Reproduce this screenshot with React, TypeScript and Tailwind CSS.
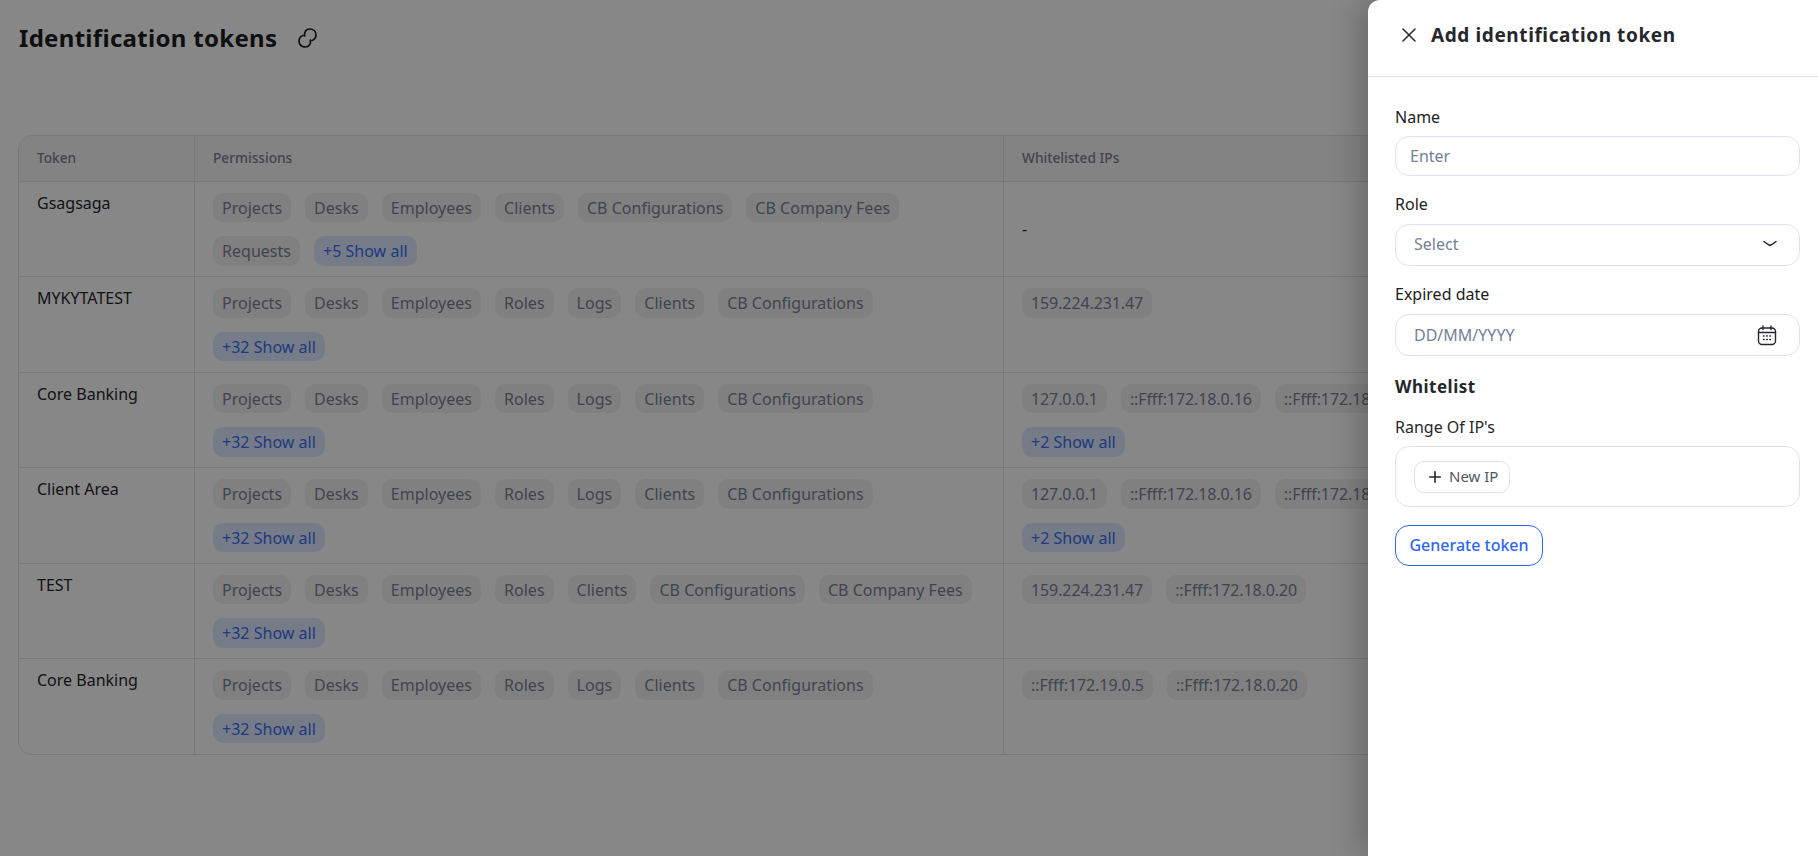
import { Plus } from "lucide-react";

type Row = {
    name: string,
    permissions: string[],
    more: string,
    ips: string[],
    ipsMore?: string
}

const rows: Row[] = [
    {
        name: "Gsagsaga",
        permissions: ["Projects", "Desks", "Employees", "Clients", "CB Configurations", "CB Company Fees", "Requests"],
        more: "+5 Show all",
        ips: []
    },
    {
        name: "MYKYTATEST",
        permissions: ["Projects", "Desks", "Employees", "Roles", "Logs", "Clients", "CB Configurations"],
        more: "+32 Show all",
        ips: ["159.224.231.47"]
    },
    {
        name: "Core Banking",
        permissions: ["Projects", "Desks", "Employees", "Roles", "Logs", "Clients", "CB Configurations"],
        more: "+32 Show all",
        ips: ["127.0.0.1", "::Ffff:172.18.0.16", "::Ffff:172.18.0.17"],
        ipsMore: "+2 Show all"
    },
    {
        name: "Client Area",
        permissions: ["Projects", "Desks", "Employees", "Roles", "Logs", "Clients", "CB Configurations"],
        more: "+32 Show all",
        ips: ["127.0.0.1", "::Ffff:172.18.0.16", "::Ffff:172.18.0.17"],
        ipsMore: "+2 Show all"
    },
    {
        name: "TEST",
        permissions: ["Projects", "Desks", "Employees", "Roles", "Clients", "CB Configurations", "CB Company Fees"],
        more: "+32 Show all",
        ips: ["159.224.231.47", "::Ffff:172.18.0.20"]
    },
    {
        name: "Core Banking",
        permissions: ["Projects", "Desks", "Employees", "Roles", "Logs", "Clients", "CB Configurations"],
        more: "+32 Show all",
        ips: ["::Ffff:172.19.0.5", "::Ffff:172.18.0.20"]
    }
]

const Chip = ({ label, className = "tracking-[0.02px]" }: { label: string, className?: string }) => (
    <span className={`flex h-[29.5px] items-center rounded-[10px] bg-[#f1f2f4] px-[9px] text-[16px] text-[#7d818f] ${className}`}>{label}</span>
)

const MoreChip = ({ label }: { label: string }) => (
    <span className="flex h-[29.5px] items-center rounded-[10px] bg-[#dfeaff] px-[9px] text-[16px] tracking-[0.02px] text-[#3a6cf5]">{label}</span>
)

const Field = ({ label, placeholder, className, icon }: { label: string, placeholder: string, className: string, icon?: React.ReactNode }) => (
    <div>
        <div className="text-[16px] leading-[22px] text-[#1c1d21]">{label}</div>
        <div className={`flex items-center justify-between rounded-[14px] border border-[#e1e3ec] ${className}`}>
            <span className="text-[16px] text-[#757f96]">{placeholder}</span>
            {icon}
        </div>
    </div>
)

const App = () => {
    return (
        <div className="relative h-screen overflow-hidden bg-white font-['Noto_Sans',sans-serif]">
            <div className="px-[18px]">
                <div className="ml-px flex h-[76px] items-center gap-[21px]">
                    <h1 className="text-[24px] font-bold tracking-[0.3px] text-[#1c1d21]">Identification tokens</h1>
                    <svg width="20" height="22" viewBox="0 0 20 22" fill="none" stroke="#1c1d21" strokeWidth="1.7" strokeLinecap="round">
                        <path d="M6.6 9C6 5 8 2 11.5 2c4 0 6.500 2.500 6.500 6 0 2.500-1.500 4.500-4 5.500" />
                        <path d="M12.400 13c.6 4-1.400 7-4.900 7-4 0-6.500-2.500-6.500-6 0-2.500 1.500-4.500 4-5.500" />
                    </svg>
                </div>
                <div className="mt-[59px] overflow-hidden rounded-[14px] border border-[#e1e3ec]">
                    <div className="grid h-[45.5px] grid-cols-[176px_809px_1fr] items-center border-b border-[#e1e3ec] bg-[#f7f7f8] text-[13.7px] font-medium text-[#7d818f]">
                        <div className="flex h-full items-center border-r border-[#e1e3ec] px-[18px]">Token</div>
                        <div className="flex h-full items-center border-r border-[#e1e3ec] px-[18px]">Permissions</div>
                        <div className="flex h-full items-center px-[18px]">Whitelisted IPs</div>
                    </div>
                    {rows.map((row, index) => (
                        <div key={index} className={`grid grid-cols-[176px_809px_1fr] ${index < rows.length - 1 ? "border-b border-[#e1e3ec]" : ""}`}>
                            <div className="border-r border-[#e1e3ec] px-[18px] pt-[9px] text-[16px] leading-[24px] text-[#26272c]">{row.name}</div>
                            <div className="flex flex-wrap content-start gap-x-[14px] gap-y-[14px] border-r border-[#e1e3ec] px-[18px] pt-[11.25px] pb-[10.25px]">
                                {row.permissions.map((item) => <Chip key={item} label={item} />)}
                                <MoreChip label={row.more} />
                            </div>
                            {row.ips.length ? (
                                <div className="flex w-[500px] flex-wrap content-start gap-[14px] px-[18px] pt-[11.25px] pb-[10.25px]">
                                    {row.ips.map((item) => <Chip key={item} label={item} className="tracking-[-0.1px]" />)}
                                    {row.ipsMore && <MoreChip label={row.ipsMore} />}
                                </div>
                            ) : (
                                <div className="flex items-center px-[18px] text-[16px] text-[#26272c]">-</div>
                            )}
                        </div>
                    ))}
                </div>
            </div>

            <div className="absolute inset-0 bg-black/[0.47]"></div>

            <div className="absolute top-0 right-0 bottom-0 w-[450px] rounded-tl-[12px] bg-white shadow-[-8px_0_30px_rgba(0,0,0,0.22)]">
                <div className="flex h-[77px] items-center gap-[14px] border-b border-[#e1e3ec] pb-[6px] pl-[33px]">
                    <svg width="16" height="16" viewBox="0 0 16 16" fill="none" stroke="#26272c" strokeWidth="1.5" strokeLinecap="round">
                        <path d="M2 2l12 12M14 2L2 14" />
                    </svg>
                    <h2 className="text-[19px] font-bold tracking-[0.6px] text-[#26272c]">Add identification token</h2>
                </div>
                <div className="flex flex-col pt-[29px] pr-[18px] pl-[27px]">
                    <Field label="Name" placeholder="Enter" className="mt-[8px] h-[40px] px-[14px]" />
                    <div className="mt-[17px]">
                        <Field
                            label="Role"
                            placeholder="Select"
                            className="mt-[9px] h-[42px] pr-[22px] pb-[2px] pl-[18px]"
                            icon={
                                <svg width="14" height="8" viewBox="0 0 14 8" fill="none" stroke="#26272c" strokeWidth="1.5" strokeLinecap="round" strokeLinejoin="round">
                                    <path d="M1 1.500c2 1.700 4 3 6 4 2-1 4-2.300 6-4" />
                                </svg>
                            }
                        />
                    </div>
                    <div className="mt-[17px]">
                        <Field
                            label="Expired date"
                            placeholder="DD/MM/YYYY"
                            className="mt-[9px] h-[42px] pr-[22px] pl-[18px]"
                            icon={
                                <svg width="20" height="21" viewBox="0 0 20 21" fill="none" stroke="#26272c" strokeWidth="1.4" strokeLinecap="round">
                                    <rect x="1.5" y="3" width="17" height="16.5" rx="3.5" />
                                    <path d="M1.5 7.5h17M6 1v3.5M14 1v3.5" />
                                    <path d="M6.5 11h.6M9.7 11h.6M12.9 11h.6M6.5 14.5h.6M9.7 14.5h.6M12.9 14.5h.6" strokeWidth="1.5" />
                                </svg>
                            }
                        />
                    </div>
                    <h3 className="mt-[18px] text-[17px] leading-[26px] font-bold tracking-[0.5px] text-[#26272c]">Whitelist</h3>
                    <div className="mt-[16px] text-[16px] leading-[22px] text-[#26272c]">Range Of IP's</div>
                    <div className="mt-[8px] flex h-[61px] items-center rounded-[14px] border border-[#e1e3ec] px-[18px]">
                        <button className="flex h-[32px] w-[96px] items-center gap-[5px] rounded-[10px] border border-[#e1e3ec] pl-[11px] text-[15px] text-[#53565f]">
                            <Plus size={18} strokeWidth={2.2} className="text-[#26272c]" />
                            New IP
                        </button>
                    </div>
                    <button className="mt-[18px] h-[41px] w-[148px] rounded-[14px] border border-[#2f66f0] pb-[1px] text-[16px] font-medium text-[#2f66f0]">Generate token</button>
                </div>
            </div>
        </div>
    )
}

export default App
